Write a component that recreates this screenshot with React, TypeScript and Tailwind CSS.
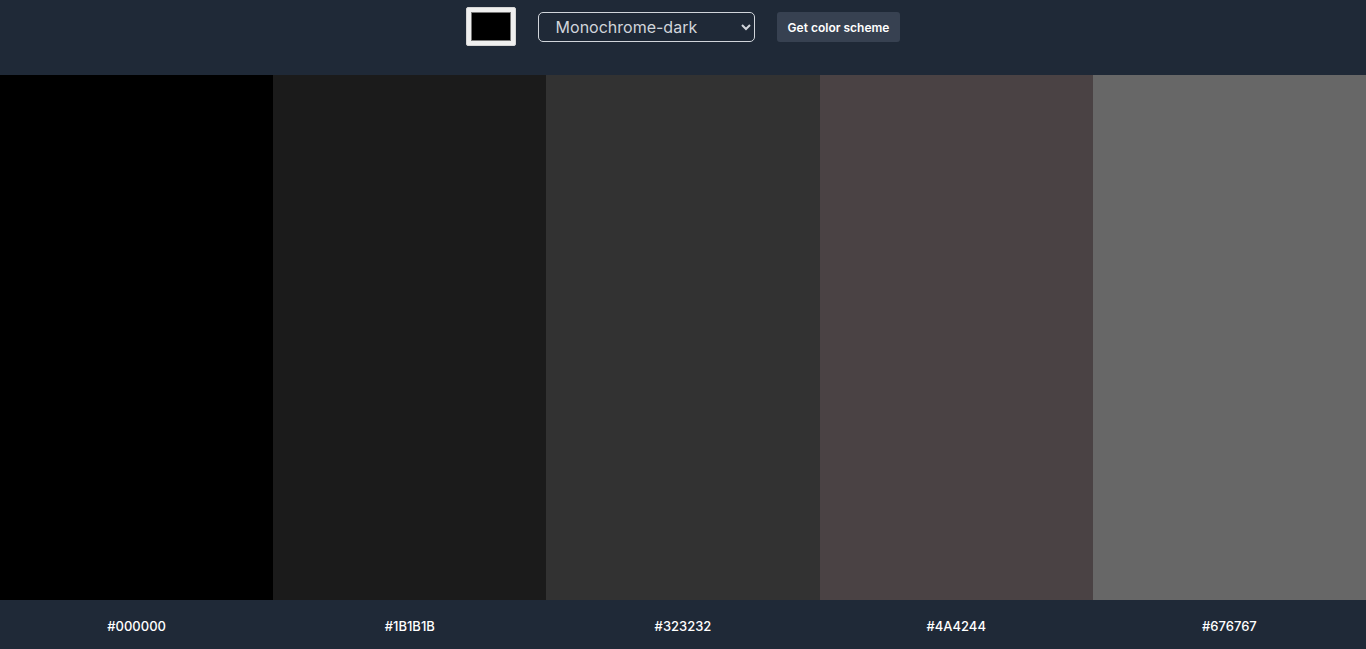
import { useState } from "react";

const colors = ["#000000", "#1B1B1B", "#323232", "#4A4244", "#676767"];

export default function App() {
    const [seed, setSeed] = useState("#000000");
    const [mode, setMode] = useState("monochrome-dark");

    return (
        <div className="flex flex-col h-[649px] w-full bg-[#1f2937] font-['Inter',sans-serif]">
            {/* Barra de controles */}
            <header className="h-[75px] shrink-0 bg-[#1f2937] flex justify-center items-start pt-[7px] gap-[22px]">
                <label className="w-[50px] h-[39px] p-[4px] bg-[#efefef] border border-[#d6d6d6] rounded-[2px] cursor-pointer">
                    <input
                        type="color"
                        value={seed}
                        onChange={(e) => setSeed(e.target.value)}
                        className="sr-only"
                    />
                    <div className="w-full h-full border border-[#777777]" style={{ backgroundColor: seed }} />
                </label>
                <select
                    value={mode}
                    onChange={(e) => setMode(e.target.value)}
                    className="mt-[5px] w-[217px] h-[30px] pl-[13px] pr-1 bg-[#1f2937] text-[#d1d5db] text-base border border-[#d1d5db] rounded-[5px]"
                >
                    <option value="monochrome">Monochrome</option>
                    <option value="monochrome-dark">Monochrome-dark</option>
                    <option value="monochrome-light">Monochrome-light</option>
                    <option value="analogic">Analogic</option>
                    <option value="complement">Complement</option>
                    <option value="analogic-complement">Analogic-complement</option>
                    <option value="triad">Triad</option>
                    <option value="quad">Quad</option>
                </select>
                <button className="mt-[5px] h-[30px] px-[11px] pt-[1px] bg-[#374151] text-white text-xs font-semibold rounded-[3px]">
                    Get color scheme
                </button>
            </header>

            {/* Paleta */}
            <main className="flex-1 grid grid-cols-5">
                {colors.map((c) => (
                    <div key={c} className="flex flex-col">
                        <div className="flex-1" style={{ backgroundColor: c }} />
                        <p className="h-[49px] pt-[4px] flex items-center justify-center text-[13px] font-medium text-white">{c}</p>
                    </div>
                ))}
            </main>
        </div>
    );
}
